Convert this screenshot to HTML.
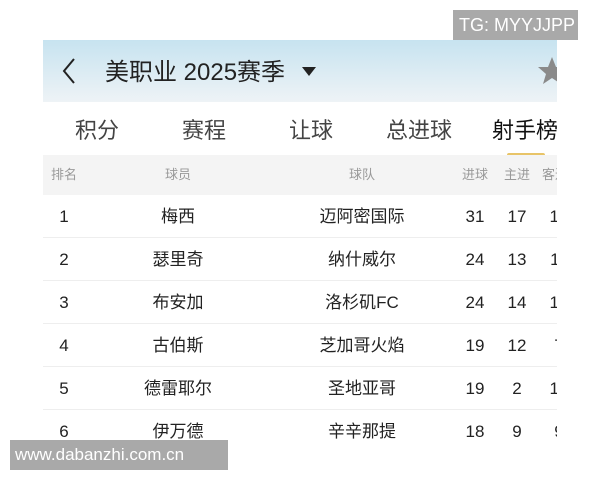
<!DOCTYPE html>
<html><head><meta charset="utf-8"><style>
*{margin:0;padding:0;box-sizing:border-box}
body{width:600px;height:480px;background:#fff;position:relative;overflow:hidden;font-family:"Liberation Sans","Noto Sans CJK SC",sans-serif;color:#222}
.wrap{position:absolute;left:43px;top:40px;width:514px;height:420px;overflow:hidden;background:#fff}
.hdr{position:absolute;left:0;top:0;width:514px;height:62px;background:linear-gradient(#c7e3f0,#eef3f6)}
.t{position:absolute;white-space:nowrap}
.tab{position:absolute;top:75px;font-size:22px;line-height:32px;color:#444;white-space:nowrap}
.th{position:absolute;left:0;top:115px;width:514px;height:40px;background:#f4f4f4}
.row{position:absolute;left:0;width:514px;height:43px;border-bottom:1px solid #eee}
.c{position:absolute;top:0;line-height:43px;transform:translateX(-50%);font-size:17px;color:#222;white-space:nowrap}
.h{font-size:13px;color:#999;line-height:40px}
.wm{position:absolute;background:#a9a9a9;color:#fff;font-size:18px;line-height:30px}
</style></head><body>
<div class="wrap">
 <div class="hdr"></div>
 <svg class="t" style="left:18px;top:17px" width="16" height="28"><path d="M13 2 L3 14 L13 26" fill="none" stroke="#222" stroke-width="2"/></svg>
 <div class="t" style="left:62px;top:16px;font-size:24px;line-height:34px;color:#222">美职业 2025赛季</div>
 <svg class="t" style="left:258px;top:26px" width="16" height="12"><path d="M1 1 L15 1 L8 10Z" fill="#222"/></svg>
 <svg class="t" style="left:494px;top:16px" width="30" height="30"><path d="M15 1 L19 11 L29 11 L21 18 L24 28 L15 22 L6 28 L9 18 L1 11 L11 11Z" fill="#8a8a8a"/></svg>
 <div class="tab" style="left:32px">积分</div>
 <div class="tab" style="left:139px">赛程</div>
 <div class="tab" style="left:246px">让球</div>
 <div class="tab" style="left:343px">总进球</div>
 <div class="tab" style="left:449px;color:#111">射手榜</div>
 <div class="t" style="left:464px;top:113px;width:38px;height:4px;border-radius:2px;background:#e8c468"></div>
 <div class="th">
  <div class="c h" style="left:21px">排名</div>
  <div class="c h" style="left:135px">球员</div>
  <div class="c h" style="left:319px">球队</div>
  <div class="c h" style="left:432px">进球</div>
  <div class="c h" style="left:474px">主进</div>
  <div class="c h" style="left:512px">客进</div>
 </div>
 <div class="row" style="top:155px"><div class="c" style="left:21px">1</div><div class="c" style="left:135px">梅西</div><div class="c" style="left:319px">迈阿密国际</div><div class="c" style="left:432px">31</div><div class="c" style="left:474px">17</div><div class="c" style="left:516px">14</div></div>
 <div class="row" style="top:198px"><div class="c" style="left:21px">2</div><div class="c" style="left:135px">瑟里奇</div><div class="c" style="left:319px">纳什威尔</div><div class="c" style="left:432px">24</div><div class="c" style="left:474px">13</div><div class="c" style="left:516px">11</div></div>
 <div class="row" style="top:241px"><div class="c" style="left:21px">3</div><div class="c" style="left:135px">布安加</div><div class="c" style="left:319px">洛杉矶FC</div><div class="c" style="left:432px">24</div><div class="c" style="left:474px">14</div><div class="c" style="left:516px">10</div></div>
 <div class="row" style="top:284px"><div class="c" style="left:21px">4</div><div class="c" style="left:135px">古伯斯</div><div class="c" style="left:319px">芝加哥火焰</div><div class="c" style="left:432px">19</div><div class="c" style="left:474px">12</div><div class="c" style="left:516px">7</div></div>
 <div class="row" style="top:327px"><div class="c" style="left:21px">5</div><div class="c" style="left:135px">德雷耶尔</div><div class="c" style="left:319px">圣地亚哥</div><div class="c" style="left:432px">19</div><div class="c" style="left:474px">2</div><div class="c" style="left:516px">17</div></div>
 <div class="row" style="top:370px;border:none"><div class="c" style="left:21px">6</div><div class="c" style="left:135px">伊万德</div><div class="c" style="left:319px">辛辛那提</div><div class="c" style="left:432px">18</div><div class="c" style="left:474px">9</div><div class="c" style="left:516px">9</div></div>
</div>
<div class="wm" style="left:453px;top:10px;width:125px;padding-left:6px">TG: MYYJJPP</div>
<div class="wm" style="left:10px;top:440px;width:218px;padding-left:5px;font-size:17px">www.dabanzhi.com.cn</div>
</body></html>
